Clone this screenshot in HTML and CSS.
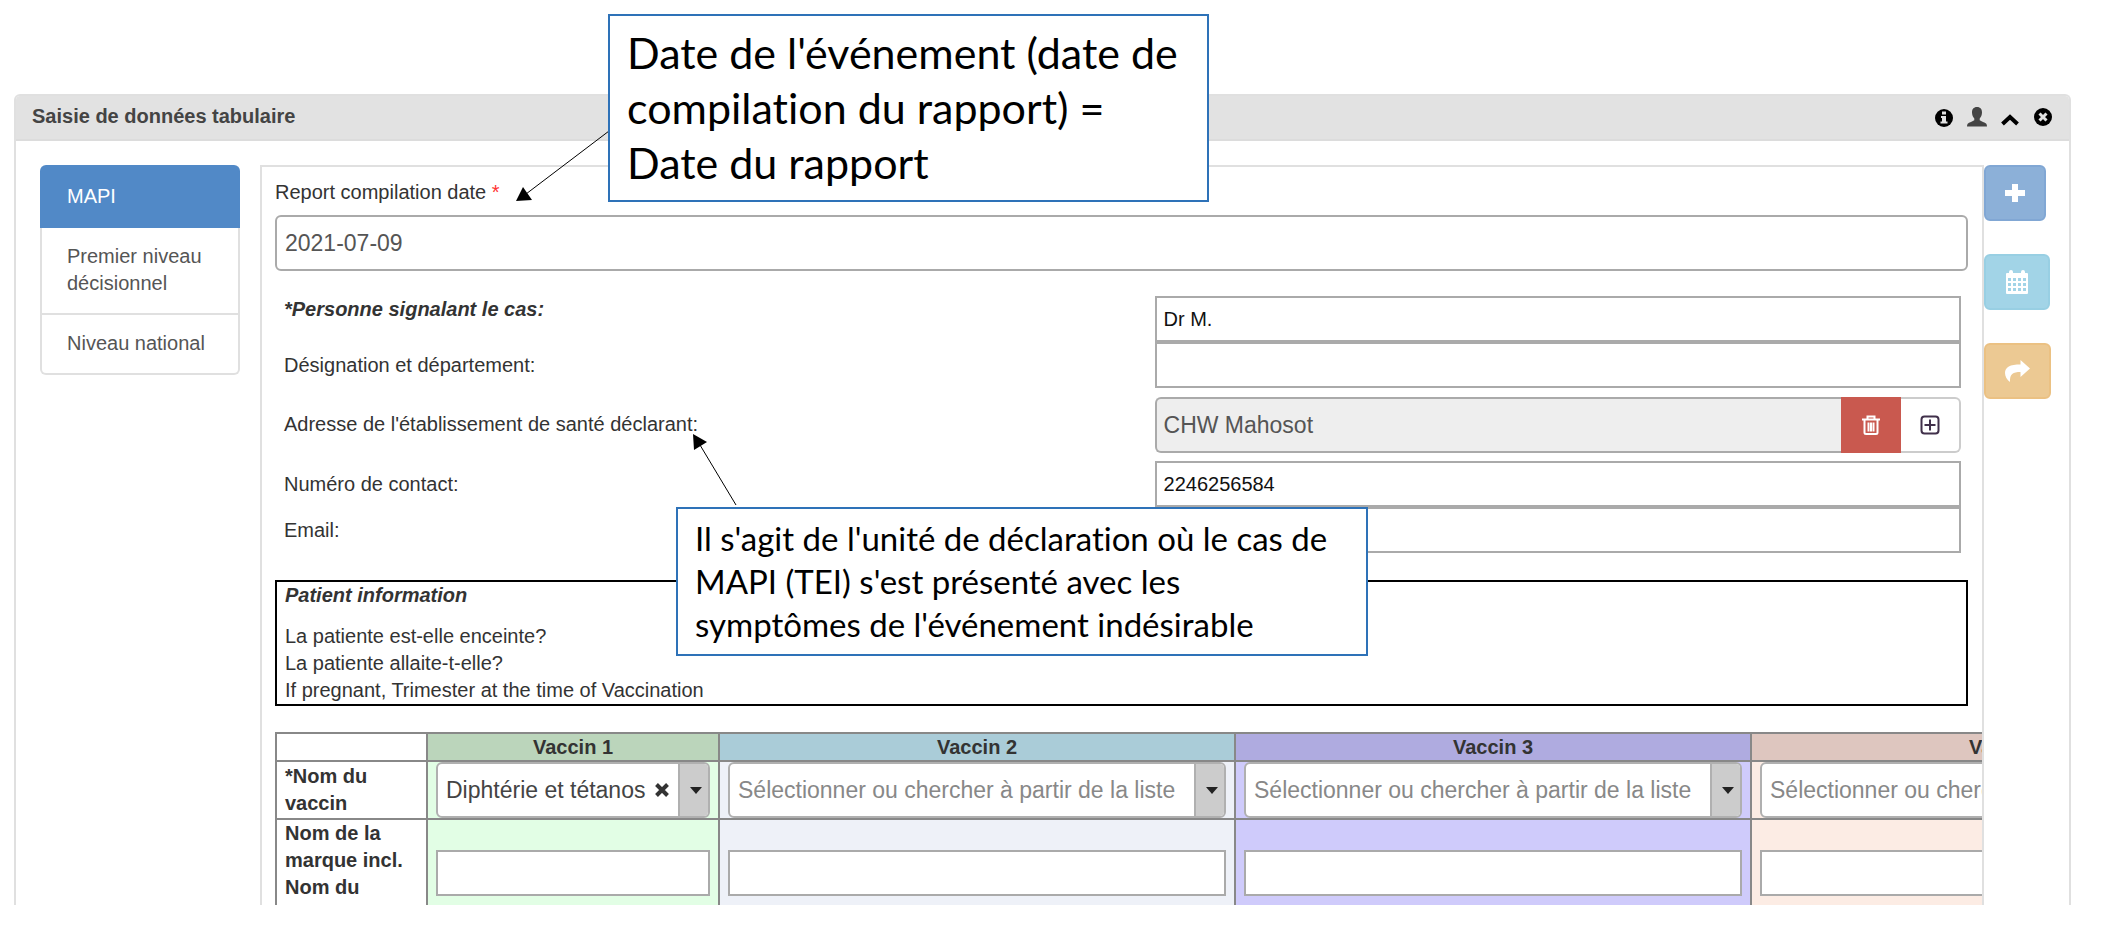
FILE: index.html
```html
<!DOCTYPE html>
<html lang="fr">
<head>
<meta charset="utf-8">
<title>Saisie de données tabulaire</title>
<link rel="stylesheet" href="styles.css">
</head>
<body>
<section class="panel">
  <header class="panel-head">
    <h1 class="panel-title">Saisie de données tabulaire</h1>
    <div class="tools">
      <button class="tool" aria-label="Informations"><svg width="20" height="20" viewBox="0 0 20 20"><circle cx="10" cy="11" r="9"/><path class="cut" d="M8 4.500h4v3H8zM7 9h5v5.500h1.500v2H6.500v-2H8V11H7z"/></svg></button>
      <button class="tool" aria-label="Utilisateur"><svg width="20" height="20" viewBox="0 0 20 20"><path class="soft" d="M10 0c3.500 0 5 2.300 5 5.500 0 2.600-1 4.600-2.300 6v1.700c1.200 1.200 5.500 2 6.600 3.500.5.800.7 1.800.7 2.800H0c0-1 .2-2 .7-2.800 1.100-1.500 5.400-2.300 6.600-3.500v-1.700C6 10.100 5 8.100 5 5.500 5 2.300 6.500 0 10 0z"/></svg></button>
      <button class="tool" aria-label="Réduire"><svg width="20" height="20" viewBox="0 0 20 20"><path class="line" d="M2.500 17l7.500-7 7.500 7"/></svg></button>
      <button class="tool" aria-label="Fermer"><svg width="20" height="20" viewBox="0 0 20 20"><circle cx="10" cy="10" r="9"/><path class="cross" d="M6.500 6.500l7 7m0-7l-7 7"/></svg></button>
    </div>
  </header>
  <div class="panel-body">
    <nav class="stages">
      <a class="stage active" href="#mapi">MAPI</a>
      <a class="stage" href="#premier">Premier niveau décisionnel</a>
      <a class="stage" href="#national">Niveau national</a>
    </nav>
    <main class="content">
      <label class="date-label" for="date">Report compilation date <span class="required">*</span></label>
      <input class="date" id="date" type="text" value="2021-07-09">
      <div class="fields">
        <label class="lead" for="reporter">*Personne signalant le cas:</label>
        <input class="field" id="reporter" type="text" value="Dr M.">
        <label for="dept">Désignation et département:</label>
        <input class="field" id="dept" type="text">
        <label for="address">Adresse de l'établissement de santé déclarant:</label>
        <div class="group">
          <input class="group-input" id="address" type="text" value="CHW Mahosot" readonly>
          <button class="group-btn delete" aria-label="Supprimer"><svg width="20" height="20" viewBox="0 0 20 20"><path d="M1 4.500h18M6.500 4V1.500h7V4M3.500 5v12.500q0 1.500 1.500 1.500h10q1.500 0 1.500-1.500V5M7.500 7.500v9M10 7.500v9M12.500 7.500v9"/></svg></button>
          <button class="group-btn add" aria-label="Choisir"><svg width="20" height="20" viewBox="0 0 20 20"><rect x="1.500" y="1.500" width="17" height="17" rx="3"/><path d="M4.500 10h11M10 4.500v11"/></svg></button>
        </div>
        <label for="phone">Numéro de contact:</label>
        <input class="field" id="phone" type="text" value="2246256584">
        <label for="email">Email:</label>
        <input class="field" id="email" type="text">
      </div>
      <section class="patient">
        <h2 class="patient-title">Patient information</h2>
        <p>La patiente est-elle enceinte?</p>
        <p>La patiente allaite-t-elle?</p>
        <p>If pregnant, Trimester at the time of Vaccination</p>
      </section>
      <table class="vaccines">
        <colgroup><col class="col-name"><col class="col-first"><col class="col-rest"><col class="col-rest"><col class="col-rest"></colgroup>
        <thead>
          <tr><td></td><th class="h1">Vaccin 1</th><th class="h2">Vaccin 2</th><th class="h3">Vaccin 3</th><th class="h4">Vaccin 4</th></tr>
        </thead>
        <tbody>
          <tr class="row-name">
            <th>*Nom du vaccin</th>
            <td class="c1"><div class="combo"><select aria-label="Nom du vaccin 1"><option>Diphtérie et tétanos</option></select><button class="clear" aria-label="Effacer"><svg width="16" height="14" viewBox="0 0 16 14"><path d="M2.500 1.500l11 11M13.500 1.500l-11 11"/></svg></button><span class="caret"></span></div></td>
            <td class="c2"><div class="combo empty"><select aria-label="Nom du vaccin 2"><option>Sélectionner ou chercher à partir de la liste</option></select><span class="caret"></span></div></td>
            <td class="c3"><div class="combo empty"><select aria-label="Nom du vaccin 3"><option>Sélectionner ou chercher à partir de la liste</option></select><span class="caret"></span></div></td>
            <td class="c4"><div class="combo empty"><select aria-label="Nom du vaccin 4"><option>Sélectionner ou chercher à partir de la liste</option></select><span class="caret"></span></div></td>
          </tr>
          <tr class="row-brand">
            <th>Nom de la marque incl. Nom du</th>
            <td class="c1"><input class="field" type="text" aria-label="Marque du vaccin 1"></td>
            <td class="c2"><input class="field" type="text" aria-label="Marque du vaccin 2"></td>
            <td class="c3"><input class="field" type="text" aria-label="Marque du vaccin 3"></td>
            <td class="c4"><input class="field" type="text" aria-label="Marque du vaccin 4"></td>
          </tr>
        </tbody>
      </table>
    </main>
    <aside class="actions">
      <button class="action create" aria-label="Ajouter"><svg width="20" height="20" viewBox="0 0 20 20"><path d="M7 1h6v6h7v6h-7v6H7v-6H0V7h7z"/></svg></button>
      <button class="action schedule" aria-label="Planifier"><svg width="24" height="24" viewBox="0 0 24 24"><path fill-rule="evenodd" d="M2 3h2V2q0-2 2-2t2 2v1h8V2q0-2 2-2t2 2v1h2q1 0 1 1v19q0 1-1 1H2q-1 0-1-1V4q0-1 1-1zM3 8v3h3V8zm5 0v3h3V8zm5 0v3h3V8zm5 0v3h3V8zM3 13v3h3v-3zm5 0v3h3v-3zm5 0v3h3v-3zm5 0v3h3v-3zM3 18v3h3v-3zm5 0v3h3v-3zm5 0v3h3v-3zm5 0v3h3v-3z"/></svg></button>
      <button class="action refer" aria-label="Référer"><svg width="25" height="22" viewBox="0 0 25 22"><path d="M15.500 0L25 8.500 15.500 17v-5C8 12 4.500 14 5 22 2 20 0 16.500 0 13 0 7 5 4.500 15.500 4.500z"/></svg></button>
    </aside>
  </div>
</section>
<svg class="arrow arrow-date" width="95" height="72" viewBox="0 0 95 72"><path d="M94 1L11 64" class="shaft"/><path d="M1 71L8 57 17 70z"/></svg>
<svg class="arrow arrow-unit" width="46" height="74" viewBox="0 0 46 74"><path d="M44 72L8 12" class="shaft"/><path d="M1 1L15 9 2 17z"/></svg>
<div class="callout callout-date">Date de l'événement (date de<br>compilation du rapport) =<br>Date du rapport</div>
<div class="callout callout-unit">Il s'agit de l'unité de déclaration où le cas de<br>MAPI (TEI) s'est présenté avec les<br>symptômes de l'événement indésirable</div>
</body>
</html>
```
FILE: styles.css
```css
* { box-sizing: border-box; }

body {
  position: relative;
  display: flex;
  height: 100vh;
  margin: 0;
  padding: 94px 35px 33px 14px;
  overflow: hidden;
  background: #fff;
  color: #333;
  font: 20px/27px "Liberation Sans", Arial, sans-serif;
}

button, input, select { font: inherit; color: inherit; margin: 0; }
button { padding: 0; }
h1, h2, p { margin: 0; font-size: 20px; }

/* Panel */
.panel {
  display: flex;
  flex: 1;
  flex-direction: column;
  min-width: 0;
  overflow: hidden;
  border: 2px solid #e0e0e0;
  border-bottom: 0;
  border-radius: 6px 6px 0 0;
}
.panel-head {
  display: flex;
  flex: none;
  align-items: center;
  justify-content: space-between;
  height: 45px;
  padding: 0 16px 2px;
  border-bottom: 2px solid #dcdcdc;
  background: #e2e2e2;
}
.panel-title { color: #444; }
.tools { display: flex; gap: 13px; }
.tool { display: flex; border: 0; background: none; }
.tool .cut { fill: #e2e2e2; }
.tool .soft { fill: #444; }
.tool .line { fill: none; stroke: #000; stroke-width: 4; }
.tool .cross { stroke: #e2e2e2; stroke-width: 3; }

.panel-body {
  display: flex;
  flex: 1;
  align-items: stretch;
  min-height: 0;
  padding: 24px 19px 0 24px;
}

/* Programme stages */
.stages {
  flex: none;
  align-self: flex-start;
  width: 200px;
  margin-right: 20px;
}
.stage {
  display: block;
  padding: 15px 25px 16px;
  border: 2px solid #e0e0e0;
  border-top: 0;
  color: #555;
  text-decoration: none;
}
.stage:last-child { border-radius: 0 0 6px 6px; }
.stage.active {
  padding: 18px 27px;
  border: 0;
  border-radius: 6px 6px 0 0;
  background: #5189c7;
  color: #fff;
}

/* Form */
.content {
  flex: 1;
  min-width: 0;
  overflow: hidden;
  padding: 12px 14px 0 13px;
  border: 2px solid #e0e0e0;
  border-bottom: 0;
}
.date-label { display: block; }
.required { color: #f33; }
.date {
  display: block;
  width: 100%;
  height: 56px;
  margin: 9px 0 25px;
  padding: 0 8px;
  border: 2px solid #aaa;
  border-radius: 6px;
  color: #555;
  font-size: 23px;
}
.fields {
  display: grid;
  grid-template-columns: 870fr 806fr;
  align-items: center;
  padding: 0 7px 0 9px;
}
.lead {
  align-self: start;
  font-weight: bold;
  font-style: italic;
}
.field {
  display: block;
  width: 100%;
  height: 46px;
  padding: 0 7px;
  border: 2px solid #aaa;
  border-radius: 0;
  background: #fff;
  color: #111;
}
.group { display: flex; height: 56px; margin: 9px 0 8px; }
.group-input {
  flex: 1;
  min-width: 0;
  padding: 0 7px;
  border: 2px solid #aaa;
  border-right: 0;
  border-radius: 6px 0 0 6px;
  background: #eee;
  color: #555;
  font-size: 23px;
}
.group-btn {
  display: flex;
  align-items: center;
  justify-content: center;
  width: 60px;
  border: 0;
}
.group-btn svg { fill: none; stroke-width: 2; }
.delete { background: #c9594f; stroke: #fff; }
.add {
  border: 2px solid #ccc;
  border-left: 0;
  border-radius: 0 6px 6px 0;
  background: #fff;
  stroke: #40304a;
}

.patient {
  margin: 27px 0 26px;
  padding: 0 8px;
  border: 2px solid #000;
}
.patient-title { margin-bottom: 14px; font-style: italic; }

/* Vaccines */
.vaccines {
  width: 1990px;
  table-layout: fixed;
  border-collapse: collapse;
}
.col-name { width: 151px; }
.col-first { width: 292px; }
.col-rest { width: 516px; }
.vaccines th, .vaccines td {
  height: 28px;
  padding: 0 8px;
  border: 2px solid #888;
}
.vaccines thead th { padding: 0; line-height: 26px; }
.vaccines tbody th { text-align: left; }
.vaccines .row-name > * { height: 58px; }
.vaccines .row-brand > * { height: 108px; }
.vaccines .row-brand th { vertical-align: top; }
.h1 { background: #bbd5bb; }
.h2 { background: #aaccd8; }
.h3 { background: #afabe0; }
.h4 { background: #dec6bf; }
.c1 { background: #e2fee5; }
.c2 { background: #eef1f8; }
.c3 { background: #cfcbfb; }
.c4 { background: #fcece4; }

.combo {
  display: flex;
  height: 56px;
  overflow: hidden;
  border: 2px solid #b0b0b0;
  border-radius: 6px;
  background: #fff;
}
.combo select {
  flex: 1;
  min-width: 0;
  appearance: none;
  padding: 0 0 0 8px;
  border: 0;
  background: none;
  color: #444;
  font-size: 23px;
}
.combo.empty select { color: #888; }
.clear { flex: none; margin-right: 8px; border: 0; background: none; }
.clear svg { display: block; }
.clear path { stroke: #333; stroke-width: 4; }
.caret {
  display: flex;
  flex: none;
  align-items: center;
  justify-content: center;
  width: 30px;
  border-left: 2px solid #b0b0b0;
  background: #ccc;
}
.caret::after {
  content: "";
  margin-left: 4px;
  border: 6px solid transparent;
  border-top: 7px solid #222;
  border-bottom: 0;
}

/* Side actions */
.actions {
  display: flex;
  flex: none;
  flex-direction: column;
  align-items: flex-start;
  gap: 33px;
  width: 66px;
}
.action {
  display: flex;
  align-items: center;
  justify-content: center;
  height: 56px;
  padding: 0 19px;
  border: 2px solid;
  border-radius: 6px;
}
.action svg { fill: #fff; }
.create { border-color: #81a7d4; background: #8cb0d8; }
.schedule { border-color: #98cfe3; background: #a2d4e7; }
.refer { border-color: #ebc183; background: #ecc993; }

/* Annotations over the form */
.callout {
  position: absolute;
  border: 2px solid #2e72b8;
  background: #fff;
  color: #000;
  font-family: Lato, sans-serif;
  font-variant-ligatures: none;
  white-space: nowrap;
}
.callout-date {
  top: 14px;
  left: 608px;
  width: 601px;
  padding: 9px 17px 10px;
  font-size: 43px;
  line-height: 55px;
}
.callout-unit {
  top: 507px;
  left: 676px;
  width: 692px;
  padding: 8px 17px;
  font-size: 33px;
  line-height: 43px;
}
.arrow { position: absolute; }
.arrow .shaft { stroke: #000; }
.arrow-date { top: 130px; left: 515px; }
.arrow-unit { top: 433px; left: 692px; }
```
